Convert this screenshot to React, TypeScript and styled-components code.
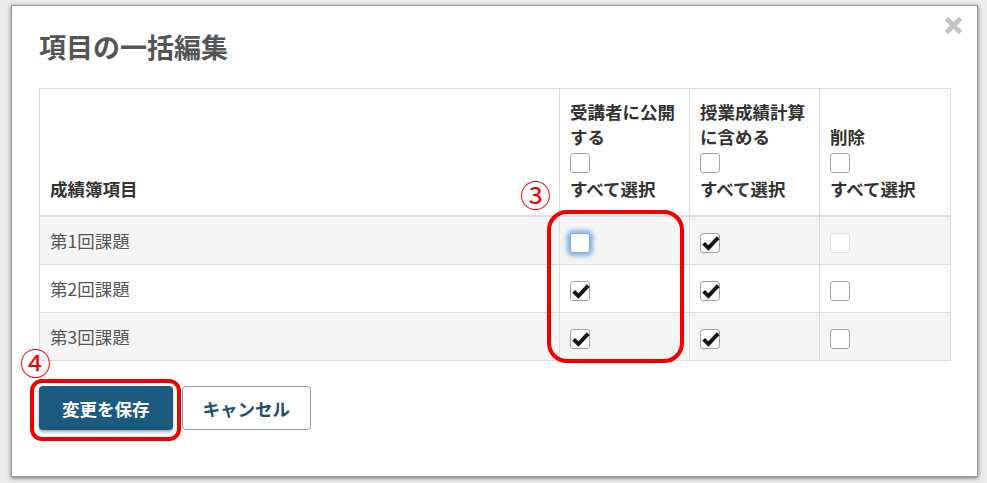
import React from "react";
import styled, { createGlobalStyle } from "styled-components";

/* ------------------ Data ------------------ */

type BoxState = "on" | "off" | "focus" | "disabled";

interface Row {
    name: string;
    publish: BoxState;
    include: BoxState;
    remove: BoxState;
}

const ROWS: Row[] = [
    { name: "第1回課題", publish: "focus", include: "on", remove: "disabled" },
    { name: "第2回課題", publish: "on", include: "on", remove: "off" },
    { name: "第3回課題", publish: "on", include: "on", remove: "off" },
];

/* ------------------ Styled ------------------ */

const GlobalStyle = createGlobalStyle`
    html, body {
        margin: 0;
        padding: 0;
        background: #ececec;
    }
    body {
        font-family: "Noto Sans CJK JP", "Noto Sans", sans-serif;
    }
`;

const Backdrop = styled.div`
    width: 987px;
    height: 483px;
    box-sizing: border-box;
    padding: 6px 10px 7px 12px;
    background: #ececec;
    display: flex;
    overflow: hidden;
`;

const Modal = styled.div`
    position: relative;
    width: 965px;
    height: 470px;
    box-sizing: border-box;
    padding: 26px 27px 0;
    background: #fff;
    box-shadow: 0 0 0 1px #9a9a9a, 0 1px 4px 1px rgba(0, 0, 0, 0.55);
    display: flex;
    flex-direction: column;
`;

const Title = styled.h2`
    margin: 0 0 27px;
    font-size: 27px;
    line-height: 29px;
    font-weight: 700;
    color: #555;
`;

const CloseButton = styled.button`
    position: absolute;
    top: 10px;
    right: 14px;
    width: 19px;
    height: 19px;
    padding: 0;
    border: 0;
    background: none;
    cursor: pointer;

    svg {
        display: block;
    }
`;

const Table = styled.table`
    width: 911px;
    border-collapse: collapse;
    table-layout: fixed;
    font-size: 17.5px;
    line-height: 25px;
`;

const HeadCell = styled.th<{ $w: number }>`
    width: ${(p) => p.$w}px;
    box-sizing: border-box;
    padding: 10px 10px 14px;
    border: 1px solid #ddd;
    border-bottom: 2px solid #ddd;
    text-align: left;
    vertical-align: bottom;
    font-weight: 700;
    color: #333;
    white-space: nowrap;
`;

const BodyRow = styled.tr<{ $striped: boolean }>`
    background: ${(p) => (p.$striped ? "#f5f5f5" : "#fff")};
`;

const Cell = styled.td`
    padding: 11px 10px;
    border: 1px solid #ddd;
    vertical-align: top;
    color: #555;
`;

const HeadBox = styled.div`
    margin: 4px 0 3px;
`;

const CellBox = styled.div`
    padding-top: 5px;
`;

const Box = styled.span<{ $state: BoxState }>`
    position: relative;
    display: block;
    width: 20px;
    height: 20px;
    box-sizing: border-box;
    border: 1px solid ${(p) => (p.$state === "disabled" ? "#dedede" : p.$state === "focus" ? "#7fb0e2" : "#a2a2a2")};
    border-radius: 3px;
    background: #fff;
    box-shadow: ${(p) => (p.$state === "focus" ? "0 0 4px 3px rgba(95, 155, 225, 0.75)" : "none")};

    svg {
        position: absolute;
        left: 0;
        top: -1px;
        display: block;
    }
`;

const Footer = styled.div`
    display: flex;
    gap: 9px;
    margin-top: 25px;
`;

const SaveButton = styled.button`
    height: 44px;
    padding: 0 23px;
    border: 0;
    border-radius: 4px;
    background: #1c5a80;
    color: #fff;
    font-family: inherit;
    font-size: 17.5px;
    font-weight: 700;
    box-shadow: 0 2px 3px rgba(0, 0, 0, 0.35);
`;

const CancelButton = styled.button`
    height: 44px;
    padding: 0 20px;
    border: 1px solid #8b9aa6;
    border-radius: 4px;
    background: #fff;
    color: #1e4f70;
    font-family: inherit;
    font-size: 17.5px;
    font-weight: 700;
`;

const Ring = styled.div<{ $x: number; $y: number; $w: number; $h: number; $r: number }>`
    position: absolute;
    left: ${(p) => p.$x}px;
    top: ${(p) => p.$y}px;
    width: ${(p) => p.$w}px;
    height: ${(p) => p.$h}px;
    box-sizing: border-box;
    border: 4px solid #f20000;
    border-radius: ${(p) => p.$r}px;
    pointer-events: none;
`;

const Marker = styled.span<{ $x: number; $y: number }>`
    position: absolute;
    left: ${(p) => p.$x}px;
    top: ${(p) => p.$y}px;
    font-family: "Noto Sans CJK JP", sans-serif;
    font-size: 31px;
    line-height: 31px;
    font-weight: 400;
    color: #f20000;
`;

/* ------------------ Component ------------------ */

const Check: React.FC<{ state: BoxState }> = ({ state }) => (
    <Box $state={state}>
        {state === "on" && (
            <svg width="20" height="20" viewBox="0 0 20 20">
                <path d="M2.6 10.4 L7.4 15 L17.2 4.6" fill="none" stroke="#161616" strokeWidth="4" strokeLinejoin="miter" />
            </svg>
        )}
    </Box>
);

export default function App() {
    return (
        <>
            <GlobalStyle />
            <Backdrop>
                <Modal>
                    <Title>項目の一括編集</Title>
                    <CloseButton aria-label="閉じる">
                        <svg width="19" height="19" viewBox="0 0 19 19">
                            <path d="M2.5 2.5 L16.5 16.5 M16.5 2.5 L2.5 16.5" stroke="#c2c2c2" strokeWidth="4.6" />
                        </svg>
                    </CloseButton>

                    <Table>
                        <thead>
                            <tr>
                                <HeadCell $w={520}>成績簿項目</HeadCell>
                                <HeadCell $w={130}>
                                    受講者に公開
                                    <br />
                                    する
                                    <HeadBox>
                                        <Check state="off" />
                                    </HeadBox>
                                    すべて選択
                                </HeadCell>
                                <HeadCell $w={130}>
                                    授業成績計算
                                    <br />
                                    に含める
                                    <HeadBox>
                                        <Check state="off" />
                                    </HeadBox>
                                    すべて選択
                                </HeadCell>
                                <HeadCell $w={131}>
                                    削除
                                    <HeadBox>
                                        <Check state="off" />
                                    </HeadBox>
                                    すべて選択
                                </HeadCell>
                            </tr>
                        </thead>
                        <tbody>
                            {ROWS.map((row, i) => (
                                <BodyRow key={row.name} $striped={i % 2 === 0}>
                                    <Cell>{row.name}</Cell>
                                    <Cell>
                                        <CellBox>
                                            <Check state={row.publish} />
                                        </CellBox>
                                    </Cell>
                                    <Cell>
                                        <CellBox>
                                            <Check state={row.include} />
                                        </CellBox>
                                    </Cell>
                                    <Cell>
                                        <CellBox>
                                            <Check state={row.remove} />
                                        </CellBox>
                                    </Cell>
                                </BodyRow>
                            ))}
                        </tbody>
                    </Table>

                    <Footer>
                        <SaveButton>変更を保存</SaveButton>
                        <CancelButton>キャンセル</CancelButton>
                    </Footer>

                    <Marker $x={508} $y={172}>③</Marker>
                    <Ring $x={535} $y={204} $w={137} $h={153} $r={20} />
                    <Marker $x={8} $y={340}>④</Marker>
                    <Ring $x={18} $y={373} $w={151} $h={62} $r={12} />
                </Modal>
            </Backdrop>
        </>
    );
}
